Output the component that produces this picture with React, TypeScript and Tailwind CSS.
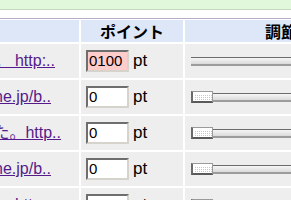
import React from "react";

const rows = [
  { text: "を読みました。 http:..", pr: "pr-[24px]", value: "0100", pink: true, thumb: false },
  { text: "ttp://d.hatena.ne.jp/b..", pr: "pr-[28px]", value: "0", pink: false, thumb: true },
  { text: "しまいそうだった。http..", pr: "pr-[18px]", value: "0", pink: false, thumb: true },
  { text: "ttp://d.hatena.ne.jp/b..", pr: "pr-[28px]", value: "0", pink: false, thumb: true },
  { text: "を読みました。 http:..", pr: "pr-[24px]", value: "0", pink: false, thumb: true },
];

function Thumb() {
  const dots = [];
  for (let r = 0; r < 3; r++) {
    for (let c = 0; c < 9; c++) {
      dots.push(<rect key={`${r}-${c}`} x={1 + c * 2} y={1 + r * 2} width="1" height="1" fill="#c8c8c8" />);
    }
  }
  return (
    <div className="w-[22px] h-[12px] shrink-0 bg-white border border-[#9a9a9a] border-b-2 border-b-[#5a5a5a] border-l-2 border-l-[#6a6a6a] flex items-center justify-center">
      <svg width="18" height="6" viewBox="0 0 18 6">{dots}</svg>
    </div>
  );
}

export default function App() {
  return (
    <div className="w-[291px] h-[200px] overflow-hidden bg-white" style={{ fontFamily: '"Liberation Sans", "Noto Sans CJK JP", sans-serif' }}>
      <div className="h-[10px] bg-[#e2f8da] border-b border-[#c6d8c0]" />
      <div className="h-[8px]" />
      <div className="h-[1px] bg-[#b4aec8]" />
      <div className="ml-[-200px] pt-[1px] grid grid-cols-[279px_102px_192px] gap-[2px]">
        <div className="h-[22px] bg-[#dde7f8]" />
        <div className="h-[22px] bg-[#dde7f8] flex items-center justify-center text-[16px] font-bold text-black" style={{ fontFamily: '"Noto Sans CJK JP", sans-serif' }}>ポイント</div>
        <div className="h-[22px] bg-[#dde7f8] flex items-center justify-center text-[16px] font-bold text-black" style={{ fontFamily: '"Noto Sans CJK JP", sans-serif' }}>調節</div>
        {rows.map((r, i) => (
          <React.Fragment key={i}>
            <div className={`h-[34px] bg-[#eeeeee] flex items-center justify-end ${r.pr} overflow-hidden whitespace-nowrap`}>
              <a className="text-[16px] text-[#551a8b] underline">{r.text}</a>
            </div>
            <div className="h-[34px] bg-[#eeeeee] flex items-center pl-[5px]">
              <div className={`w-[43px] h-[22px] border-2 border-t-[#6e6e6e] border-l-[#6e6e6e] border-b-[#d6d3cc] border-r-[#d6d3cc] ${r.pink ? "bg-[#ffcccc]" : "bg-white"} flex items-center pl-[1px] text-[15px] text-black`}>
                {r.value}
              </div>
              <span className="ml-[4px] text-[17px] text-black">pt</span>
            </div>
            <div className="h-[34px] bg-[#eeeeee] flex items-center pl-[6px]">
              {r.thumb && <Thumb />}
              <div className="flex-1 h-[9px] border-t border-t-[#6c6c6c] border-b-2 border-b-[#9c9c9c] bg-gradient-to-b from-[#f6f6f6] to-[#dadada]" />
            </div>
          </React.Fragment>
        ))}
      </div>
    </div>
  );
}
